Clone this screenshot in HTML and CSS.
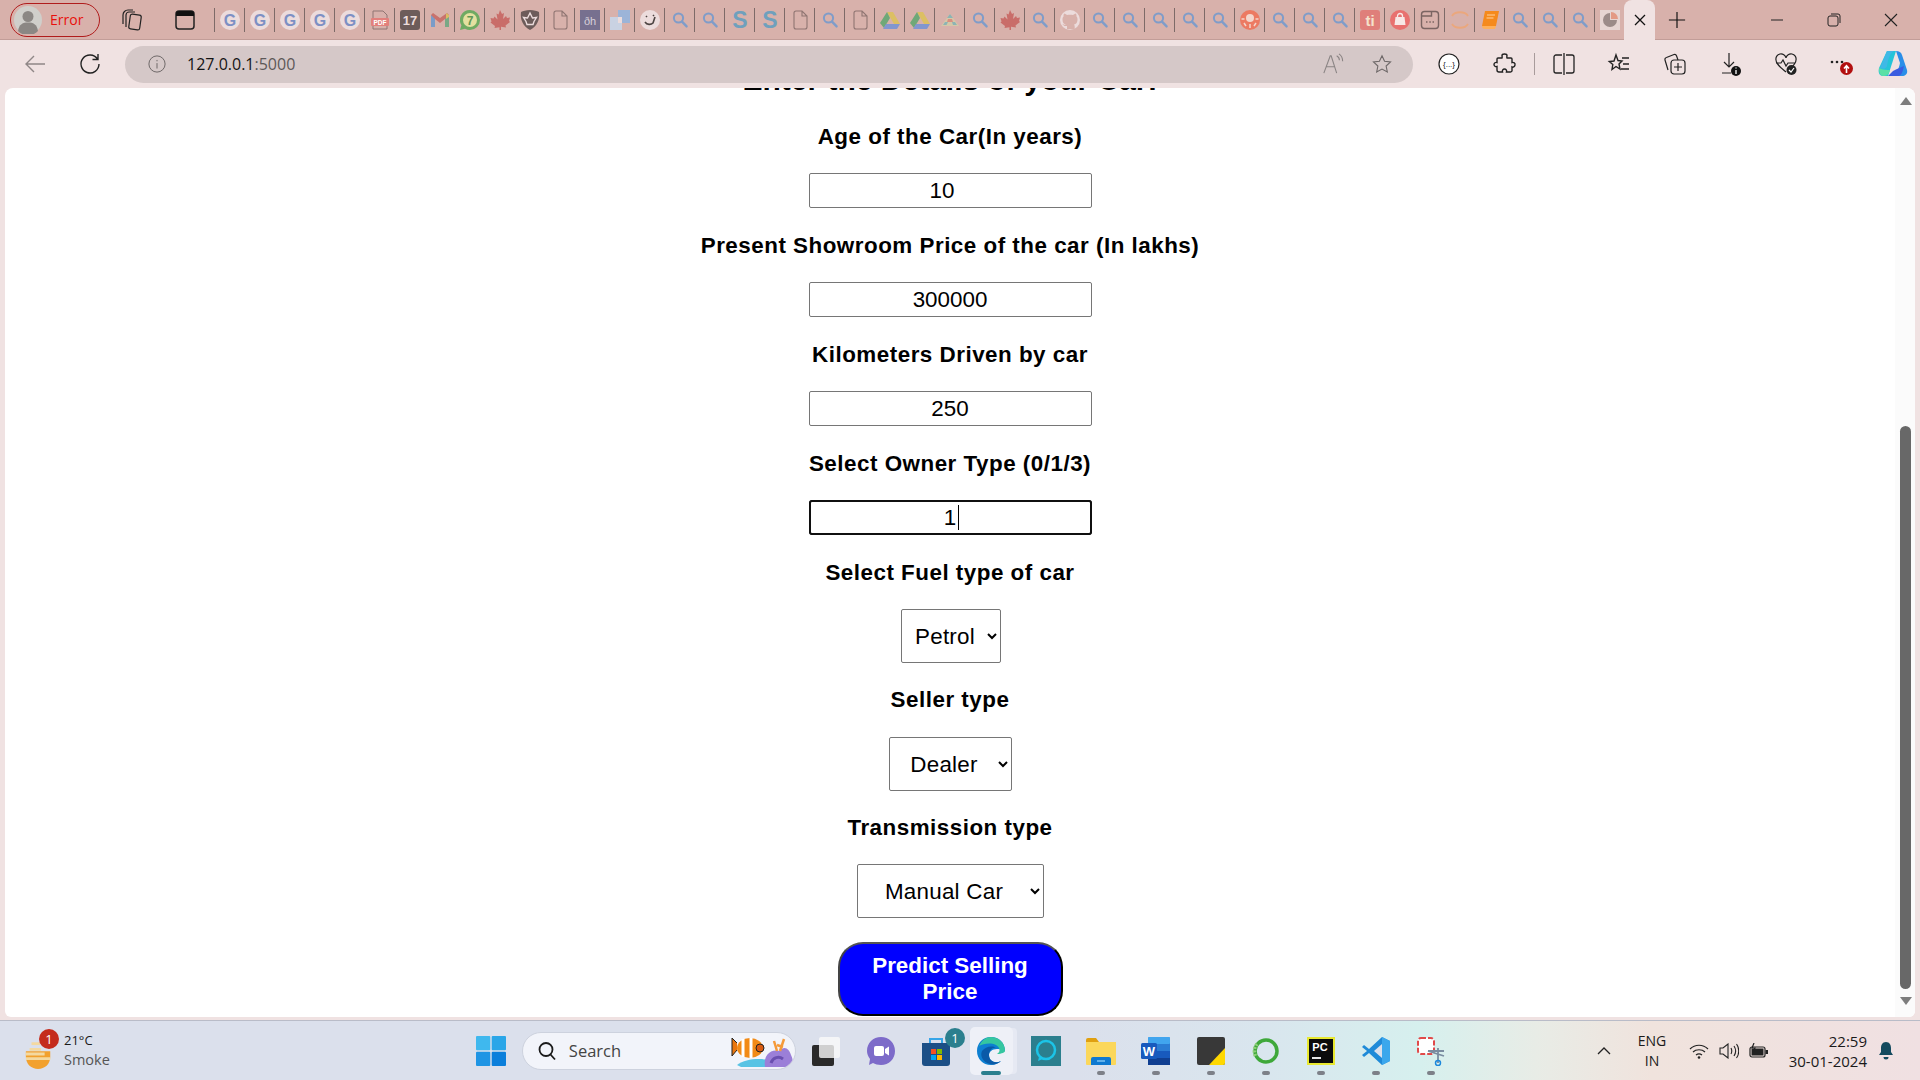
FILE: index.html
```html
<!DOCTYPE html>
<html lang="en">
<head>
<meta charset="utf-8">
<title>Car Price Prediction</title>
<link rel="stylesheet" href="styles.css">
</head>
<body>
<svg class="defs" width="0" height="0" aria-hidden="true">
  <symbol id="g" viewBox="0 0 20 20"><circle cx="10" cy="10" r="10" fill="#ecdcdc"/><text x="10" y="16" text-anchor="middle" class="ico-text" font-size="16" fill="#7d90c4">G</text></symbol>
  <symbol id="mag" viewBox="0 0 20 20"><circle cx="8.5" cy="8" r="4.6" fill="none" stroke="#7f9cc9" stroke-width="2"/><path d="M12 11.6l4.6 4.8" stroke="#7f9cc9" stroke-width="2.4" stroke-linecap="round"/></symbol>
  <symbol id="doc" viewBox="0 0 20 20"><path d="M4 3a2 2 0 0 1 2-2h6l5 5v11a2 2 0 0 1-2 2H6a2 2 0 0 1-2-2z M12 1v5h5" fill="none" stroke="#8f7572" stroke-width="1.1"/></symbol>
  <symbol id="drive" viewBox="0 0 20 20"><path d="M7 2h6l7 12h-6z" fill="#dcbf63"/><path d="M7 2l3 6-6 10-4-5z" fill="#6fa878"/><path d="M6 14h14l-3 5H3z" fill="#8296cf"/></symbol>
  <symbol id="maple" viewBox="0 0 20 20"><path d="M10 0l2 4 2-1-1 6 3-3 1 2 3-.4-1 3.4 1 1-4.500 3.500.5 2-5-.7V20H9.500v-2.700l-5 .7.5-2L.500 12.500l1-1-1-3.400 3 .4 1-2 3 3-1-6 2 1z" fill="#c96d69"/></symbol>
  <symbol id="s" viewBox="0 0 20 20"><text x="10" y="18" text-anchor="middle" class="ico-text" font-size="23" fill="#6fa0bd">S</text></symbol>
</svg>

<header class="tabstrip">
  <div class="profile">
    <svg class="avatar" viewBox="0 0 28 28"><circle cx="14" cy="14" r="14" fill="#d0cfcb"/><circle cx="14" cy="10.500" r="5.500" fill="#8b8784"/><path d="M4 25c1-7 5-8.500 10-8.500s9 1.500 10 8.500a14 14 0 0 1-20 0z" fill="#8b8784"/></svg>
    <span class="profile-label">Error</span>
  </div>
  <svg class="tool-ico workspaces" viewBox="0 0 24 24" fill="none" stroke="#222" stroke-width="1.200"><rect x="9.500" y="6.500" width="11" height="15" rx="2" transform="rotate(8 15 14)"/><path d="M6 19V7a3 3 0 0 1 3-3h6M3 16V7a5 5 0 0 1 5-5h5"/></svg>
  <svg class="tool-ico tabactions" viewBox="0 0 24 24"><rect x="3" y="3" width="18" height="18" rx="3" fill="none" stroke="#222" stroke-width="1.500"/><path d="M3 6a3 3 0 0 1 3-3h12a3 3 0 0 1 3 3v2H3z" fill="#111"/></svg>
  <div class="tabs">
    <div class="tab"><svg class="fav"><use href="#g"/></svg></div>
    <div class="tab"><svg class="fav"><use href="#g"/></svg></div>
    <div class="tab"><svg class="fav"><use href="#g"/></svg></div>
    <div class="tab"><svg class="fav"><use href="#g"/></svg></div>
    <div class="tab"><svg class="fav"><use href="#g"/></svg></div>
    <div class="tab"><svg class="fav" viewBox="0 0 20 20"><path d="M3 1h10l4 4v4H3z" fill="none" stroke="#8f7572"/><rect x="1" y="8" width="18" height="8" rx="1" fill="#e2807c"/><text x="10" y="14.500" text-anchor="middle" class="ico-text" font-size="6.500" fill="#fff">PDF</text><path d="M3 16v3h14v-3" fill="none" stroke="#8f7572"/></svg></div>
    <div class="tab"><svg class="fav" viewBox="0 0 20 20"><rect width="20" height="20" rx="3" fill="#6d5c5a"/><text x="10" y="15" text-anchor="middle" class="ico-text" font-size="13" fill="#ecdcdc">17</text></svg></div>
    <div class="tab"><svg class="fav" viewBox="0 0 20 20"><path d="M1 5v12h4V9l5 4 5-4v8h4V5l-2-2-7 5-7-5z" fill="#c9726d"/><path d="M1 5v12h4V9z" fill="#7b9cc8"/><path d="M15 9v8h4V5z" fill="#79a886"/><path d="M16 3l3 2v2l-3 2z" fill="#d9bd63"/></svg></div>
    <div class="tab"><svg class="fav" viewBox="0 0 20 20"><path d="M10 0a10 10 0 0 1 0 20 10 10 0 0 1-5-1.300L0 20l1.400-4.800A10 10 0 0 1 10 0z" fill="#6faa62"/><circle cx="10" cy="10" r="7" fill="#e4e0a0"/><text x="10" y="14.500" text-anchor="middle" class="ico-text" font-size="12" fill="#5f9655">7</text></svg></div>
    <div class="tab"><svg class="fav"><use href="#maple"/></svg></div>
    <div class="tab"><svg class="fav" viewBox="0 0 20 20"><path d="M10 0c4 0 7 1 9 2 1 8-2 14-9 18C3 16 0 10 1 2c2-1 5-2 9-2z" fill="#6d5c5a"/><path d="M10 3l2.500 5 4-.5-2.500 4 -1 3H7l-1-3-2.500-4 4 .5z" fill="none" stroke="#ecdcdc" stroke-width="1.400"/></svg></div>
    <div class="tab"><svg class="fav"><use href="#doc"/></svg></div>
    <div class="tab"><svg class="fav" viewBox="0 0 20 20"><rect width="20" height="20" fill="#77708f"/><text x="10" y="14.500" text-anchor="middle" class="ico-thin" font-size="11" fill="#d8d0da">ðh</text></svg></div>
    <div class="tab"><svg class="fav" viewBox="0 0 20 20"><rect x="8" width="12" height="13" fill="#9cb4d8"/><rect y="7" width="12" height="13" fill="#c9d2e2"/><rect x="8" y="7" width="4" height="6" fill="#ecdcdc"/></svg></div>
    <div class="tab"><svg class="fav" viewBox="0 0 20 20"><circle cx="10" cy="10" r="10" fill="#ecdcdc"/><path d="M6 6l1 1M13 5l1 1M5 12c2 3 6 3 8 1l2-6" fill="none" stroke="#4d4442" stroke-width="1.600"/></svg></div>
    <div class="tab"><svg class="fav"><use href="#mag"/></svg></div>
    <div class="tab"><svg class="fav"><use href="#mag"/></svg></div>
    <div class="tab"><svg class="fav"><use href="#s"/></svg></div>
    <div class="tab"><svg class="fav"><use href="#s"/></svg></div>
    <div class="tab"><svg class="fav"><use href="#doc"/></svg></div>
    <div class="tab"><svg class="fav"><use href="#mag"/></svg></div>
    <div class="tab"><svg class="fav"><use href="#doc"/></svg></div>
    <div class="tab"><svg class="fav"><use href="#drive"/></svg></div>
    <div class="tab"><svg class="fav"><use href="#drive"/></svg></div>
    <div class="tab"><svg class="fav" viewBox="0 0 20 20"><path d="M10 4l9 12H1z" fill="#d6c7a8"/><path d="M10 4l3 4H7zM5 12h3l-1.500 3H3zM12 12h3l2 3h-4z" fill="#8cb4b4"/><path d="M8 9h4l1 3H7z" fill="#d98f80"/></svg></div>
    <div class="tab"><svg class="fav"><use href="#mag"/></svg></div>
    <div class="tab"><svg class="fav"><use href="#maple"/></svg></div>
    <div class="tab"><svg class="fav"><use href="#mag"/></svg></div>
    <div class="tab"><svg class="fav" viewBox="0 0 20 20"><circle cx="10" cy="10" r="10" fill="#ecdcdc"/><path d="M7 19v-3c-3 .5-4-1-4.500-2 2 1 2.500 1 3.500.5-3-.5-3.500-3-3.500-5.500 0-1 .5-2 1-2.500 0-1 0-2 .5-3 1 0 2 .5 3 1.500 2-.5 4-.5 6 0 1-1 2-1.500 3-1.500.5 1 .5 2 .5 3 .5.5 1 1.500 1 2.500 0 2.500-.5 5-3.500 5.500.5.5.7 1.200.7 2v3z" fill="#d8b1ab"/></svg></div>
    <div class="tab"><svg class="fav"><use href="#mag"/></svg></div>
    <div class="tab"><svg class="fav"><use href="#mag"/></svg></div>
    <div class="tab"><svg class="fav"><use href="#mag"/></svg></div>
    <div class="tab"><svg class="fav"><use href="#mag"/></svg></div>
    <div class="tab"><svg class="fav"><use href="#mag"/></svg></div>
    <div class="tab"><svg class="fav" viewBox="0 0 20 20"><circle cx="10" cy="10" r="10" fill="#ec7a62"/><circle cx="10" cy="8" r="4" fill="#f3d6cc"/><path d="M4 13l2 3M16 13l-2 3M10 14v4M1.500 9h3M15.500 9h3" stroke="#f3d6cc" stroke-width="1.500"/></svg></div>
    <div class="tab"><svg class="fav"><use href="#mag"/></svg></div>
    <div class="tab"><svg class="fav"><use href="#mag"/></svg></div>
    <div class="tab"><svg class="fav"><use href="#mag"/></svg></div>
    <div class="tab"><svg class="fav" viewBox="0 0 20 20"><rect width="20" height="20" rx="3" fill="#df7f7a"/><text x="10" y="15.500" text-anchor="middle" class="ico-text" font-size="15" fill="#f5e2cc">ti</text></svg></div>
    <div class="tab"><svg class="fav" viewBox="0 0 20 20"><circle cx="10" cy="10" r="10" fill="#e8716f"/><path d="M5.500 7h9l1 8h-11z" fill="#f7e8e6"/><path d="M7.500 8V6a2.500 2.500 0 0 1 5 0v2" fill="none" stroke="#f7e8e6" stroke-width="1.300"/></svg></div>
    <div class="tab"><svg class="fav" viewBox="0 0 20 20"><rect x="1.500" y="1.500" width="17" height="17" rx="3" fill="none" stroke="#7a6462" stroke-width="1.400"/><path d="M1.500 6h10V1.500" fill="none" stroke="#7a6462" stroke-width="1.400"/><path d="M6 12h1.500M9.300 12h1.500M12.500 12H14" stroke="#7a6462" stroke-width="1.600"/></svg></div>
    <div class="tab"><svg class="fav" viewBox="0 0 20 20" fill="none" stroke="#eba77c" stroke-width="1.800"><path d="M2 6c3-5 13-5 16 0M2 14c3 5 13 5 16 0"/></svg></div>
    <div class="tab"><svg class="fav" viewBox="0 0 20 20"><path d="M5 1h14l-3 15H2z" fill="#f58a1d"/><path d="M2 16c0 2 1 3 3 3h10l1-3z" fill="#ffb05a"/><path d="M7 5h8M6.500 8h7" stroke="#ffd2a0" stroke-width="1"/></svg></div>
    <div class="tab"><svg class="fav"><use href="#mag"/></svg></div>
    <div class="tab"><svg class="fav"><use href="#mag"/></svg></div>
    <div class="tab"><svg class="fav"><use href="#mag"/></svg></div>
    <div class="tab"><svg class="fav" viewBox="0 0 20 20"><rect width="20" height="20" fill="#e6d5d2"/><path d="M10 3a7 7 0 1 0 7 7h-7z" fill="#9b8b88"/><path d="M11 2a7 7 0 0 1 7 7h-7z" fill="#e39a84"/></svg></div>
  </div>
  <div class="tab-active"><svg class="win-ico" viewBox="0 0 16 16" stroke="#111" stroke-width="1.300"><path d="M3 3l10 10M13 3L3 13"/></svg></div>
  <svg class="new-tab" viewBox="0 0 20 20" stroke="#111" stroke-width="1.300"><path d="M10 1v18M1 10h18"/></svg>
  <div class="win-controls">
    <svg class="win-ico" viewBox="0 0 16 16" stroke="#222" stroke-width="1"><path d="M2 8h12"/></svg>
    <svg class="win-ico" viewBox="0 0 16 16" fill="none" stroke="#222" stroke-width="1"><rect x="2" y="4" width="10" height="10" rx="2"/><path d="M5 2h7a2 2 0 0 1 2 2v7"/></svg>
    <svg class="win-ico" viewBox="0 0 16 16" stroke="#222" stroke-width="1.100"><path d="M2 2l12 12M14 2L2 14"/></svg>
  </div>
</header>

<nav class="toolbar">
  <svg class="nav-ico back" viewBox="0 0 24 24" fill="none" stroke="#8f8787" stroke-width="1.400"><path d="M22 12H3M11 4l-8 8 8 8"/></svg>
  <svg class="nav-ico reload" viewBox="0 0 24 24" fill="none" stroke="#222" stroke-width="1.400"><path d="M19.500 7A9 9 0 1 0 21 12M20 2v5.500h-5.500"/></svg>
  <div class="address">
    <svg class="info" viewBox="0 0 20 20" fill="none" stroke="#6e6868" stroke-width="1.100"><circle cx="10" cy="10" r="9"/><path d="M10 9v6M10 5.500v1.500"/></svg>
    <span class="url">127.0.0.1<span class="url-port">:5000</span></span>
    <div class="address-end">
      <svg class="addr-ico" viewBox="0 0 24 24" fill="none" stroke="#8a8484" stroke-width="1.200"><path d="M2 22L9 3h1l6 19M5 15h9M16 3c2 1 3 3 3 5M18.500 1c3 2 4 5 4 8"/></svg>
      <svg class="addr-ico" viewBox="0 0 24 24" fill="none" stroke="#6e6868" stroke-width="1.200"><path d="M12 3l2.800 6 6.500.8-4.800 4.400 1.300 6.500L12 17.500l-5.800 3.200 1.300-6.500L2.700 9.800 9.200 9z"/></svg>
    </div>
  </div>
  <div class="tools">
    <svg class="tool-slot" viewBox="0 0 24 24" fill="#fff" stroke="#222" stroke-width="1.200"><circle cx="12" cy="12" r="10"/><text x="12" y="15" text-anchor="middle" class="ico-thin" font-size="8" fill="#222" stroke="none">{...}</text></svg>
    <svg class="tool-slot" viewBox="0 0 24 24" fill="none" stroke="#222" stroke-width="1.400"><path d="M9 3.500c0-2 5-2 5 0 0 1-.5 1.500 0 2.500h4a1 1 0 0 1 1 1v3.500c1.500-.5 3.500.5 3 2.500s-2 2.500-3 2v4a2 2 0 0 1-2 1h-3.500c.5-1.500-.5-3-2-3s-2.500 1.500-2 3H6a2 2 0 0 1-2-2v-3.500c-1.500.5-3-.5-3-2s1.500-2.500 3-2V7a1 1 0 0 1 1-1h4c.4-1 0-1.500 0-2.500z"/></svg>
    <span class="tool-divider"></span>
    <svg class="tool-slot split" viewBox="0 0 24 24" fill="none" stroke="#222" stroke-width="1.300"><path d="M10 3H4a2 2 0 0 0-2 2v14a2 2 0 0 0 2 2h6M14 3h6a2 2 0 0 1 2 2v14a2 2 0 0 1-2 2h-6M12 1v22"/></svg>
    <svg class="tool-slot" viewBox="0 0 24 24" fill="none" stroke="#222" stroke-width="1.400"><path d="M9 3l2 5.500 4 .5-3 3 1 5-4-2.500L5 17.500l.8-5-3.500-3 4.700-.5zM15 6h7M16 12h6M14 17h8"/></svg>
    <svg class="tool-slot" viewBox="0 0 24 24" fill="none" stroke="#222" stroke-width="1.200"><rect x="8" y="8" width="14" height="14" rx="3"/><path d="M15 11v8M11 15h8M5 18L2 8a2 2 0 0 1 1.500-2.500L11 2.500a2 2 0 0 1 2.500 1.200L15 8"/></svg>
    <svg class="tool-slot" viewBox="0 0 24 24"><path d="M11 1v14M6 10l5 5 5-5M4 21h9" fill="none" stroke="#222" stroke-width="1.200"/><circle cx="18" cy="19" r="5" fill="#111"/><path d="M18 18v4M18 15.500v1" stroke="#fff" stroke-width="1.300"/></svg>
    <svg class="tool-slot" viewBox="0 0 24 24"><path d="M12 20C6 15 2 12 2 8a5 5 0 0 1 10-2 5 5 0 0 1 10 2c0 4-4 7-8 11M2 11h5l2-3 3 6 2-3h7" fill="none" stroke="#222" stroke-width="1.200"/><circle cx="17.500" cy="18" r="5" fill="#222"/><path d="M15 18l2 2 3-4" fill="none" stroke="#fff" stroke-width="1.200"/></svg>
    <svg class="tool-slot" viewBox="0 0 24 24"><circle cx="3" cy="10" r="1.300" fill="#222"/><circle cx="8" cy="10" r="1.300" fill="#222"/><circle cx="13" cy="10" r="1.300" fill="#222"/><circle cx="17.500" cy="16.500" r="6.500" fill="#b20f0f"/><path d="M17.500 21v-7M15 16.500l2.500-2.800 2.500 2.800" fill="none" stroke="#fff" stroke-width="1.600"/></svg>
    <svg class="copilot" viewBox="0 0 30 30"><path d="M9 2h9l-8 25H5C1 27 0 23 1 19z" fill="#25c4d8"/><path d="M9 2h7c-4 2-6 8-7 15-1 3-4 3-7 2z" fill="#3fb9e6"/><path d="M18 2c3 0 5 1 6 4l5 15c1 4-2 6-5 6h-9c4-2 6-8 7-13z" fill="#2a8ee8"/><path d="M10 27h10c4 0 5-6 6-10-4 2-8 3-11 5z" fill="#3a5ce0"/><path d="M5 27c3 0 6-1 7-6-3 0-7 0-11-2 0 4 1 8 4 8z" fill="#5ce0a6"/></svg>
  </div>
</nav>

<div class="frame">
  <div class="viewport">
    <main class="page">
      <form class="car-form">
        <h2 class="form-title">Enter the Details of your Car:</h2>
        <label class="field-label">Age of the Car(In years)</label>
        <input class="field-input spin-offset" type="text" value="10">
        <label class="field-label">Present Showroom Price of the car (In lakhs)</label>
        <input class="field-input" type="text" value="300000">
        <label class="field-label">Kilometers Driven by car</label>
        <input class="field-input" type="text" value="250">
        <label class="field-label">Select Owner Type (0/1/3)</label>
        <div class="caret-wrap">
          <input class="field-input is-focused" type="text" value="1">
          <span class="caret"></span>
        </div>
        <label class="field-label">Select Fuel type of car</label>
        <select class="field-select select-fuel"><option>Petrol</option><option>Diesel</option><option>CNG</option></select>
        <label class="field-label">Seller type</label>
        <select class="field-select select-seller"><option>Dealer</option><option>Individual</option></select>
        <label class="field-label">Transmission type</label>
        <select class="field-select select-trans"><option>Manual Car</option><option>Automatic Car</option></select>
        <button class="predict" type="button">Predict Selling Price</button>
      </form>
    </main>
    <aside class="scrollbar">
      <svg class="sb-arrow sb-up" viewBox="0 0 12 8"><path d="M6 0l6 8H0z" fill="#7d7d7d"/></svg>
      <div class="sb-thumb"></div>
      <svg class="sb-arrow sb-down" viewBox="0 0 12 8"><path d="M0 0h12L6 8z" fill="#7d7d7d"/></svg>
    </aside>
  </div>
</div>

<footer class="taskbar">
  <div class="weather">
    <svg class="weather-ico" viewBox="0 0 32 34"><path d="M2 14h26v6c0 8-6 13-13 13S2 28 2 20z" fill="#f2a12e"/><path d="M2 22h26M6 12h12M2 17h20" stroke="#f4d9a0" stroke-width="3"/><path d="M8 6h9" stroke="#f4d9a0" stroke-width="3"/></svg>
    <span class="weather-badge">1</span>
    <div class="weather-text"><span class="weather-temp">21°C</span><span class="weather-desc">Smoke</span></div>
  </div>
  <svg class="win-logo" viewBox="0 0 30 30"><rect width="14.300" height="14.300" rx="1" fill="#3fb8ee"/><rect x="15.700" width="14.300" height="14.300" rx="1" fill="#2aa6e8"/><rect y="15.700" width="14.300" height="14.300" rx="1" fill="#1f95e4"/><rect x="15.700" y="15.700" width="14.300" height="14.300" rx="1" fill="#0b7fdb"/></svg>
  <div class="search">
    <svg class="search-ico" viewBox="0 0 20 20" fill="none" stroke="#1b1b1b" stroke-width="1.800"><circle cx="9" cy="8.500" r="6.500"/><path d="M13.500 13.500l4.500 5"/></svg>
    <span class="search-text">Search</span>
    <svg class="search-art" viewBox="0 0 64 32"><path d="M6 30c8-6 20-7 34-5l-4 7H10z" fill="#58c3e4"/><ellipse cx="19" cy="13" rx="13" ry="10" fill="#f28a16"/><path d="M12 4v18M20 3v20" stroke="#fff" stroke-width="3"/><path d="M6 8L1 3v18l5-6" fill="#e9760e" stroke="#222"/><circle cx="29" cy="13" r="4" fill="#d85a10" stroke="#222"/><path d="M34 32c-2-12 6-18 14-16 6-6 10-2 12 4 3 6 2 10-2 12z" fill="#9b7fd8"/><path d="M46 16l-3-10M49 16l4-12M46 10l6 2" stroke="#f59a3a" stroke-width="2.500"/><path d="M40 28c2-6 8-7 12-4" fill="none" stroke="#6a4fb0" stroke-width="3"/></svg>
  </div>
  <div class="pins">
    <div class="pin"><svg class="pin-ico" viewBox="0 0 30 30"><rect x="1" y="9" width="22" height="21" rx="2" fill="#2a2a2a"/><rect x="8" y="1" width="21" height="21" rx="2" fill="#fafafa" opacity=".8"/></svg></div>
    <div class="pin"><svg class="pin-ico" viewBox="0 0 30 30"><path d="M15 1c8 0 14 6 14 14s-6 14-14 14c-3 0-6-1-8-2l-4 2 1-6C2 20 1 18 1 15 1 7 7 1 15 1z" fill="#7d6bc9"/><rect x="8" y="10" width="10" height="10" rx="2" fill="#fff"/><path d="M19 13l4-2.500v9L19 17z" fill="#fff"/></svg></div>
    <div class="pin"><svg class="pin-ico" viewBox="0 0 30 30"><path d="M1 7h28v20a3 3 0 0 1-3 3H4a3 3 0 0 1-3-3z" fill="#1c4f86"/><path d="M9 7V3h12v4" fill="none" stroke="#36a5e8" stroke-width="2"/><rect x="10" y="13" width="5" height="5" fill="#f25022"/><rect x="16" y="13" width="5" height="5" fill="#7fba00"/><rect x="10" y="19" width="5" height="5" fill="#00a4ef"/><rect x="16" y="19" width="5" height="5" fill="#ffb900"/></svg><span class="pin-badge">1</span></div>
    <div class="pin pin-active"><svg class="pin-ico" viewBox="0 0 30 30"><path d="M15 1C7 1 1 7 1 15c0 8 6 14 14 14 4 0 8-2 10-4-6 3-12 0-12-6 0-3 3-6 8-6s8 3 8 2C29 7 23 1 15 1z" fill="#0e7fd1"/><path d="M3 10C6 4 10 1 15 1c7 0 14 5 14 14 0 1-3 3-8 3 4-2 3-7-1-9-6-3-13-1-17 1z" fill="#35c6a0"/><path d="M13 19c0 6 6 9 12 6-3 3-7 4-11 3-8-2-10-9-8-13 3-4 10-6 14-3-4-1-7 3-7 7z" fill="#0a5aa8"/></svg><span class="pin-run"></span></div>
    <div class="pin"><svg class="pin-ico" viewBox="0 0 30 30"><rect width="30" height="30" fill="#2b7f8e"/><circle cx="15" cy="14" r="9" fill="none" stroke="#1cc4e8" stroke-width="2.500"/><path d="M8 21l-1 4 5-2" fill="#1cc4e8"/></svg></div>
    <div class="pin"><svg class="pin-ico" viewBox="0 0 30 30"><path d="M0 4a2 2 0 0 1 2-2h8l3 4H0z" fill="#e0a010"/><path d="M0 6h30v22a1 1 0 0 1-1 1H1a1 1 0 0 1-1-1z" fill="#fbd75b"/><path d="M5 23a2 2 0 0 1 2-2h16a2 2 0 0 1 2 2v6H5z" fill="#0f79d0"/><path d="M11 25h8" stroke="#7cc4f4" stroke-width="1.500"/></svg><span class="pin-dot"></span></div>
    <div class="pin"><svg class="pin-ico" viewBox="0 0 30 30"><rect x="7" y="1" width="22" height="28" rx="2" fill="#2b7cd3"/><rect x="7" y="1" width="22" height="7" rx="1" fill="#41a5ee"/><rect x="7" y="15" width="22" height="7" fill="#185abd"/><rect x="7" y="22" width="22" height="7" fill="#103f91"/><rect y="7" width="16" height="16" rx="1.500" fill="#185abd"/><text x="8" y="20" text-anchor="middle" class="ico-text" font-size="13" fill="#fff">W</text></svg><span class="pin-dot"></span></div>
    <div class="pin"><svg class="pin-ico" viewBox="0 0 30 30"><rect x="1" y="1" width="28" height="28" rx="2" fill="#383838"/><path d="M13 29l16-17v15a2 2 0 0 1-2 2z" fill="#ffd800"/></svg><span class="pin-dot"></span></div>
    <div class="pin"><svg class="pin-ico" viewBox="0 0 30 30"><circle cx="15" cy="15" r="11" fill="none" stroke="#3ea83a" stroke-width="3.500"/><path d="M6 8a11 11 0 0 0-1 13" fill="none" stroke="#8fcf7a" stroke-width="3.500" stroke-dasharray="2 1.500"/></svg><span class="pin-dot"></span></div>
    <div class="pin"><svg class="pin-ico" viewBox="0 0 30 30"><rect x="1" y="1" width="28" height="28" fill="#e8e830"/><rect x="3" y="3" width="24" height="24" fill="#0b0b0b"/><text x="14" y="15" text-anchor="middle" class="ico-text" font-size="11" fill="#fff">PC</text><path d="M6 22h9" stroke="#fff" stroke-width="1.800"/></svg><span class="pin-dot"></span></div>
    <div class="pin"><svg class="pin-ico" viewBox="0 0 30 30"><path d="M21 1l8 4v20l-8 4L8 17l-5 4-2-2 5-4-5-4 2-2 5 4z" fill="#1f8ad8"/><path d="M21 1l8 4v20l-8 4z" fill="#3ba7ec"/><path d="M21 8v14l-8-7z" fill="#dbe0ec"/></svg><span class="pin-dot"></span></div>
    <div class="pin"><svg class="pin-ico" viewBox="0 0 30 30"><rect x="2" y="2" width="16" height="16" rx="3" fill="#fff" stroke="#e04a4a" stroke-width="2" stroke-dasharray="5 2"/><path d="M12 15l16 5M28 15l-16 0M22 12v15" stroke="#7a8ca0" stroke-width="1.800"/><circle cx="22" cy="27" r="2.500" fill="none" stroke="#1c88dc" stroke-width="1.500"/></svg><span class="pin-dot"></span></div>
  </div>
  <div class="tray">
    <svg class="tray-chevron" viewBox="0 0 14 8" fill="none" stroke="#222" stroke-width="1.300"><path d="M1 7l6-6 6 6"/></svg>
    <div class="tray-lang"><span>ENG</span><span>IN</span></div>
    <svg class="tray-ico wifi" viewBox="0 0 20 16" fill="none" stroke="#222" stroke-width="1.200"><path d="M1 6c5-5 13-5 18 0M4 9c3-3 9-3 12 0M7 12c2-1.500 4-1.500 6 0"/><circle cx="10" cy="14.500" r="1.300" fill="#222" stroke="none"/></svg>
    <svg class="tray-ico vol" viewBox="0 0 20 16" fill="none" stroke="#222" stroke-width="1.100"><path d="M1 5h3l5-4v14l-5-4H1zM12 5c1 2 1 4 0 6M15 3c2 3 2 7 0 10M17.500 1c3 4 3 10 0 14"/></svg>
    <svg class="tray-ico batt" viewBox="0 0 20 16"><rect x="1" y="4" width="15" height="10" rx="2" fill="none" stroke="#222" stroke-width="1.200"/><rect x="2.500" y="5.500" width="12" height="7" fill="#222"/><rect x="16.500" y="7" width="2.500" height="4" fill="#222"/><path d="M5 0L3 5h3l-2 4" fill="none" stroke="#222" stroke-width="1.200"/></svg>
    <div class="tray-clock"><span>22:59</span><span>30-01-2024</span></div>
    <svg class="tray-bell" viewBox="0 0 16 20"><path d="M8 1c3.500 0 5 3 5 6v4l2 3H1l2-3V7c0-3 1.500-6 5-6z" fill="#134a5e"/><path d="M5.500 16a2.500 2.500 0 0 0 5 0z" fill="#134a5e"/></svg>
  </div>
</footer>
</body>
</html>
```
FILE: styles.css
```css
* { box-sizing: border-box; }
html, body { margin: 0; height: 100%; }
body {
  display: flex;
  flex-direction: column;
  height: 100vh;
  overflow: hidden;
  font-family: "Liberation Sans", Arial, sans-serif;
  background: #f0e2e2;
}
.defs { position: absolute; }
.ico-text { font-family: "Liberation Sans", sans-serif; font-weight: 700; }
.ico-thin { font-family: "Liberation Sans", sans-serif; font-weight: 400; }

/* tab strip */
.tabstrip {
  flex: 0 0 40px;
  display: flex;
  align-items: center;
  background: #d8b1ab;
  border-bottom: 1px solid #c29d98;
}
.profile {
  flex: 0 0 90px;
  height: 34px;
  margin-left: 10px;
  display: flex;
  align-items: center;
  gap: 8px;
  padding-left: 3px;
  border: 1.500px solid #b01c1c;
  border-radius: 17px;
}
.avatar { width: 28px; height: 28px; }
.profile-label { font: 14px "Open Sans", sans-serif; color: #e8100c; }
.tool-ico { width: 24px; height: 24px; flex: none; }
.workspaces { margin-left: 20px; }
.tabactions { margin-left: 29px; }
.tabs { display: flex; margin-left: 17px; }
.tab {
  flex: 0 0 30px;
  height: 24px;
  display: flex;
  align-items: center;
  justify-content: center;
  border-left: 1px solid #7d6a68;
}
.fav { width: 20px; height: 20px; display: block; }
.tab-active {
  flex: 0 0 31px;
  height: 40px;
  margin-bottom: -1px;
  background: #f0e2e2;
  border-radius: 8px 8px 0 0;
  display: flex;
  align-items: center;
  justify-content: center;
}
.win-ico { width: 16px; height: 16px; flex: none; }
.new-tab { width: 18px; height: 18px; margin-left: 13px; flex: none; }
.win-controls {
  margin-left: auto;
  display: flex;
  gap: 41px;
  padding-right: 21px;
}

/* toolbar */
.toolbar {
  flex: 0 0 48px;
  display: flex;
  align-items: center;
  background: #f0e2e2;
}
.nav-ico { width: 24px; height: 24px; flex: none; }
.back { margin-left: 23px; }
.reload { margin-left: 31px; }
.address {
  flex: 0 0 1288px;
  height: 37px;
  margin-left: 23px;
  border-radius: 18.500px;
  background: #d5c8c8;
  display: flex;
  align-items: center;
  padding-left: 23px;
}
.info { width: 18px; height: 18px; flex: none; }
.url {
  margin-left: 21px;
  font: 16px "Open Sans", sans-serif;
  color: #141414;
}
.url-port { color: #5d5858; }
.address-end {
  margin-left: auto;
  display: flex;
  gap: 27px;
  padding-right: 20px;
}
.addr-ico { width: 22px; height: 22px; }
.tools {
  display: flex;
  align-items: center;
  margin-left: 24px;
}
.tool-slot { width: 24px; height: 24px; margin-right: 31.500px; flex: none; }
.tool-divider {
  width: 1.500px;
  height: 22px;
  flex: none;
  background: #a89b9b;
  margin-left: -14.500px;
}
.split { margin-left: 16.500px; }
.copilot { width: 30px; height: 30px; flex: none; margin-left: -6.500px; }

/* page */
.frame {
  flex: 1;
  min-height: 0;
  padding: 0 5px 3px;
  background: #f0e2e2;
}
.viewport {
  height: 100%;
  display: flex;
  background: #fff;
  border-radius: 8px 8px 6px 6px;
  overflow: hidden;
}
.page { flex: 1; min-width: 0; overflow: hidden; }
.car-form {
  display: flex;
  flex-direction: column;
  align-items: center;
  margin-top: -27px;
}
.form-title {
  margin: 0 0 1px;
  font-size: 30px;
  line-height: 37px;
  font-weight: 700;
  color: #000;
}
.field-label {
  margin: 24px 0 23px;
  font-size: 22.400px;
  line-height: 27px;
  font-weight: 700;
  letter-spacing: .5px;
  color: #000;
}
.field-input {
  display: block;
  width: 283px;
  height: 35px;
  padding: 0 2px;
  border: 1px solid #767676;
  border-radius: 2px;
  background: #fff;
  font: 22.400px "Liberation Sans", sans-serif;
  color: #000;
  text-align: center;
}
.spin-offset { padding-right: 18px; }
.is-focused { border: 2px solid #101010; outline: 1px solid #101010; outline-offset: -1px; border-radius: 3px; }
.caret-wrap { position: relative; }
.caret {
  position: absolute;
  left: 149px;
  top: 5px;
  width: 1px;
  height: 25px;
  background: #000;
}
.field-select {
  display: block;
  height: 54px;
  border: 1px solid #767676;
  border-radius: 2px;
  background: #fff;
  font: 22.400px "Liberation Sans", sans-serif;
  letter-spacing: .25px;
  color: #000;
  text-align: center;
  text-align-last: center;
  padding: 0;
}
.field-select + .field-label { margin-top: 23px; }
.select-fuel { width: 100px; margin-left: 2px; }
.select-seller { width: 123px; margin-top: 1px; }
.select-trans { width: 187px; }
.predict {
  width: 225px;
  height: 74px;
  margin-top: 24px;
  padding: 0 20px;
  background: #0000ff;
  color: #fff;
  border: 2px solid #000;
  border-top-color: #555;
  border-left-color: #444;
  border-radius: 25px;
  font: 700 22.400px/26px "Liberation Sans", sans-serif;
  text-align: center;
}

/* scrollbar */
.scrollbar {
  flex: 0 0 20px;
  background: #fbfbfb;
  display: flex;
  flex-direction: column;
  align-items: center;
  padding-left: 1px;
}
.sb-arrow { width: 12px; height: 8px; flex: none; }
.sb-up { margin-top: 9px; }
.sb-thumb {
  flex: 0 0 563px;
  width: 11px;
  margin-top: 321px;
  border-radius: 5.500px;
  background: #686868;
}
.sb-down { margin-top: 8px; }

/* taskbar */
.taskbar {
  flex: 0 0 60px;
  display: flex;
  align-items: center;
  position: relative;
  border-top: 1px solid #b9bcc8;
  background: linear-gradient(90deg, #dbe0ec 0, #dbe0ec 56%, #d9e6ee 66%, #d6f0ee 74%, #e8ece6 80%, #f0e3dd 86%, #f0e0e2 100%);
}
.weather { flex: 0 0 auto; display: flex; align-items: center; position: relative; margin-left: 24px; }
.weather-ico { width: 30px; height: 32px; flex: none; margin-top: 6px; }
.weather-badge {
  position: absolute;
  left: 15px;
  top: -3px;
  width: 20px;
  height: 20px;
  border-radius: 50%;
  background: #c42b1c;
  color: #fff;
  font: 13px/20px "Open Sans", sans-serif;
  text-align: center;
}
.weather-text { display: flex; flex-direction: column; margin-left: 10px; gap: 2px; margin-top: -2px; }
.weather-temp { font: 13px/18px "Open Sans", sans-serif; color: #1a1a1a; }
.weather-desc { font: 14.500px/18px "Open Sans", sans-serif; color: #555; }
.win-logo { width: 30px; height: 30px; flex: none; margin-left: 366px; }
.search {
  flex: 0 0 274px;
  height: 38px;
  margin-left: 16px;
  display: flex;
  align-items: center;
  padding-left: 14px;
  background: #f2f4fa;
  border: 1px solid #cdd2de;
  border-radius: 19px;
  overflow: hidden;
}
.search-ico { width: 20px; height: 20px; flex: none; }
.search-text { margin-left: 12px; font: 16.500px "Open Sans", sans-serif; color: #444; }
.search-art { width: 64px; height: 32px; margin-left: auto; flex: none; }
.pins { display: flex; margin-left: 3px; align-self: stretch; align-items: center; }
.pin {
  flex: 0 0 55px;
  height: 48px;
  display: flex;
  align-items: center;
  justify-content: center;
  position: relative;
}
.pin-ico { width: 30px; height: 30px; }
.pin-active { background: #eef0f7; border-radius: 5px; box-shadow: 5px 0 0 -1px #e6e9f3; width: 43px; flex: 0 0 43px; margin: 0 6px; }
.pin-badge {
  position: absolute;
  left: 36px;
  top: 1px;
  width: 20px;
  height: 20px;
  border-radius: 50%;
  background: #2b7f8e;
  color: #fff;
  font: 13px/20px "Open Sans", sans-serif;
  text-align: center;
}
.pin-dot {
  position: absolute;
  left: 50%;
  bottom: 0;
  width: 8px;
  height: 4px;
  margin-left: -4px;
  border-radius: 2px;
  background: #7d8088;
}
.pin-run {
  position: absolute;
  left: 50%;
  bottom: 0;
  width: 20px;
  height: 4px;
  margin-left: -10px;
  border-radius: 2px;
  background: #2b7f8e;
}
.tray { margin-left: auto; display: flex; align-items: center; padding-right: 26px; }
.tray-chevron { width: 14px; height: 8px; flex: none; }
.tray-lang {
  width: 40px;
  margin-left: 21px;
  display: flex;
  flex-direction: column;
  align-items: center;
  font: 14px/20px "Open Sans", sans-serif;
  color: #1a1a1a;
}
.tray-ico { width: 20px; height: 16px; flex: none; }
.wifi { margin-left: 17px; }
.vol, .batt { margin-left: 10px; }
.tray-clock {
  width: 98px;
  display: flex;
  flex-direction: column;
  align-items: flex-end;
  font: 15px/20px "Open Sans", sans-serif;
  color: #1a1a1a;
}
.tray-bell { width: 16px; height: 20px; margin-left: 11px; flex: none; }
```
